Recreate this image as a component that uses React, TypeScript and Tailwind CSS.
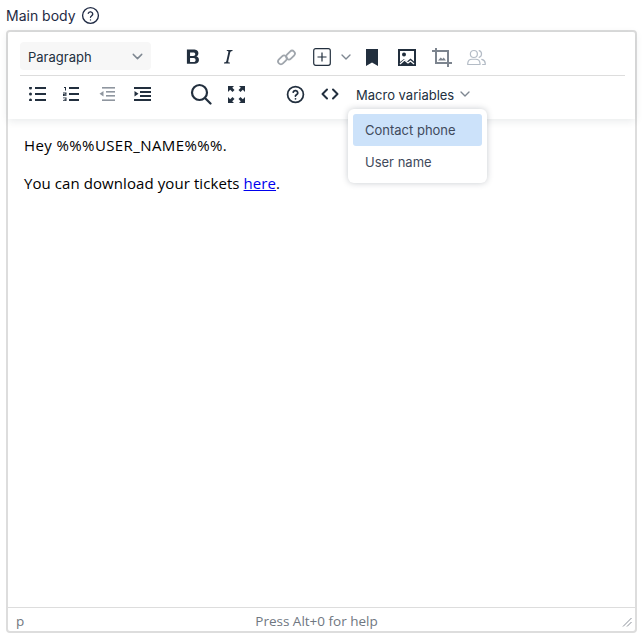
import { ChevronDown } from 'lucide-react'

const ink = '#222f3e'

function Btn({ children, w = 'w-[34px]' }: { children: React.ReactNode; w?: string }) {
  return <div className={`${w} h-[30px] flex items-center justify-center shrink-0`}>{children}</div>
}

export default function App() {
  return (
    <div className="w-[643px] h-[640px] bg-white relative font-['Inter',sans-serif] overflow-hidden">
      {/* Label */}
      <div className="h-[30px] pl-[6px] flex items-center gap-[5px] text-[14px] text-[#1f2a44]">
        <span>Main body</span>
        <svg width="19" height="19" viewBox="0 0 24 24" fill="none" stroke="#1f2a44" strokeWidth="1.700" strokeLinecap="round" strokeLinejoin="round">
          <circle cx="12" cy="12" r="10" />
          <path d="M9.200 9.200a3 3 0 0 1 5.700 1c0 2-2.900 2.600-2.900 4" />
          <path d="M12 17.600h.01" />
        </svg>
      </div>

      {/* Editor */}
      <div className="ml-[6px] w-[631px] h-[603px] border-2 border-[#dddddd] rounded-[4px] flex flex-col relative">
        <div className="h-[87px] pl-[12px] pr-[10px] pt-[10px] shadow-[0_2px_8px_rgba(34,47,62,0.1)] shrink-0 text-[#222f3e]">
          {/* Row 1 */}
          <div className="h-[34px] flex items-start border-b border-[#dddddd]">
            <div className="w-[131px] h-[28px] bg-[#f7f7f7] rounded-[4px] flex items-center justify-between pl-[8px] pr-[5px] text-[13px] text-[#222f3e] mr-[24px]">
              <span className="mt-[3px]">Paragraph</span>
              <ChevronDown size={17} color="#7e8791" />
            </div>
            <Btn><svg width="26" height="26" viewBox="0 0 24 24"><path fill={ink} d="M7.300 19V5h5.900c1.500 0 2.700.3 3.500.9.800.6 1.200 1.500 1.200 2.600 0 .7-.2 1.300-.5 1.800-.4.500-.9.800-1.500 1 .8.200 1.400.6 1.800 1.200.5.600.7 1.300.7 2.100 0 1.200-.4 2.100-1.200 2.800-.8.600-2 .9-3.500.9H7.300zm2.900-6v3.700h3.200c.6 0 1.100-.2 1.400-.5.400-.3.500-.8.500-1.300 0-1.200-.6-1.900-1.900-1.900h-3.200zm0-2h2.900c.6 0 1-.1 1.400-.4.300-.3.500-.7.500-1.200s-.2-1-.5-1.200c-.3-.3-.8-.4-1.400-.4h-2.900V11z" /></svg></Btn>
            <Btn w="w-[38px]"><svg width="24" height="24" viewBox="0 0 24 24"><path fill={ink} d="M10.800 5h5.700v.9c-.9 0-1.400.2-1.700.5-.3.300-.5.800-.7 1.500l-1.800 8.200c-.1.500-.1.900.1 1.100.2.300.700.4 1.500.4v.9H8v-.9c.9 0 1.500-.2 1.800-.5.300-.3.500-.8.700-1.500l1.800-8.200c.1-.5.100-.9-.1-1.100-.2-.3-.7-.4-1.400-.4z" /></svg></Btn>
            <div className="w-[22px]" />
            <Btn w="w-[35px]"><svg width="19" height="19" viewBox="0 0 19 19" fill="none" stroke="#a0a6ad" strokeWidth="1.800"><rect x="8.500" y="4.300" width="10" height="5.600" rx="2.800" transform="rotate(-45 13.500 7.100)" /><rect x="0.500" y="9.100" width="10" height="5.600" rx="2.800" transform="rotate(-45 5.500 11.900)" /></svg></Btn>
            <Btn w="w-[36px]"><svg width="18" height="18" viewBox="0 0 18 18" fill="none" stroke={ink} strokeWidth="1.200"><rect x="0.700" y="0.700" width="16.600" height="16.600" rx="2" /><path d="M9 4.500v9M4.500 9h9" /></svg></Btn>
            <div className="w-[12px] h-[30px] flex items-center justify-center"><ChevronDown size={16} color="#7e8791" className="shrink-0" /></div>
            <Btn w="w-[40px]"><svg width="12" height="17" viewBox="0 0 12 17"><path fill={ink} d="M0 0h12v17l-6-3.600L0 17z" /></svg></Btn>
            <Btn w="w-[30px]"><svg width="18" height="17" viewBox="0 0 18 17"><path fill={ink} d="M0 0h18v17H0z" /><path fill="#ffffff" d="M2 2h14v10.500l-3.500-3-3.500 3-3-2.500L2 13z" /><circle cx="6" cy="5.500" r="2" fill={ink} /><path fill="none" stroke="#ffffff" strokeWidth="1.300" d="M2 15l4.500-4 3.500 3 2.500-2 3.500 3" /></svg></Btn>
            <Btn w="w-[40px]"><svg width="20" height="19" viewBox="0 0 20 19" fill="none" stroke="#7c848e" strokeWidth="2"><path d="M4 0v15h16M0 3h16v16" /><path fill="#7c848e" stroke="none" d="M6 12.500l2.700-3 1.700 1.500 1.300-1.500 2.300 3z" /></svg></Btn>
            <Btn w="w-[28px]"><svg width="21" height="21" viewBox="0 0 24 24" fill="none" stroke="#b4bcc6" strokeWidth="1.400" strokeLinecap="round" strokeLinejoin="round"><circle cx="9" cy="8" r="4" /><path d="M2 20v-1.500a5 5 0 0 1 5-4.500h4a5 5 0 0 1 5 4.500V20z" /><path d="M15 4.200a4 4 0 0 1 0 7.600M18 14.200a5 5 0 0 1 4 4.500V20h-3" /></svg></Btn>
          </div>
          {/* Row 2 */}
          <div className="h-[36px] flex items-center text-[#222f3e]">
            <Btn w="w-[34px]"><svg width="17" height="14" viewBox="0 0 17 14"><g fill={ink}><circle cx="1.500" cy="1" r="1.500" /><circle cx="1.500" cy="7" r="1.500" /><circle cx="1.500" cy="13" r="1.500" /><rect x="6" y="0" width="11" height="2" /><rect x="6" y="6" width="11" height="2" /><rect x="6" y="12" width="11" height="2" /></g></svg></Btn>
            <Btn w="w-[34px]"><svg width="16" height="14" viewBox="0 0 16 14"><g fill={ink}><rect x="6" y="0" width="10" height="2" /><rect x="6" y="6" width="10" height="2" /><rect x="6" y="12" width="10" height="2" /><path d="M1 0h2v3.500H2V1H1zM0 5.500h3.500v2.200H1.200v.5h2.300V9H0V6.800h2.300v-.5H0zM0 10.500h3.500V14H0v-.8h2.400v-.6H.8v-.7h1.600v-.6H0z" /></g></svg></Btn>
            <Btn w="w-[38px]"><svg width="17" height="14" viewBox="0 0 17 14"><g fill="#8f969f"><rect x="3" y="0" width="13" height="1.600" /><rect x="7" y="4" width="9" height="1.600" /><rect x="7" y="8" width="9" height="1.600" /><rect x="3" y="12.400" width="13" height="1.600" /><path d="M4.500 4v5.500L0.500 6.800z" /></g></svg></Btn>
            <Btn w="w-[32px]"><svg width="17" height="14" viewBox="0 0 17 14"><g fill={ink}><rect x="0" y="0" width="17" height="2" /><rect x="6" y="4" width="11" height="2" /><rect x="6" y="8" width="11" height="2" /><rect x="0" y="12" width="17" height="2" /><path d="M0.500 4v5.500L4.500 6.800z" /></g></svg></Btn>
            <div className="w-[24px]" />
            <Btn w="w-[38px]"><svg width="22" height="22" viewBox="0 0 22 22" fill="none" stroke={ink} strokeWidth="2.200" strokeLinecap="round"><circle cx="9.500" cy="9.500" r="7.500" /><path d="M15 15l5.500 5.500" /></svg></Btn>
            <Btn w="w-[32px]"><svg width="17" height="17" viewBox="0 0 17 17"><g fill={ink}><path d="M0 0h6L4.300 1.700 6.500 4 4.500 6 2.200 3.700 0 6zM17 0v6l-2.200-2.300L12.500 6l-2-2 2.300-2.300L11 0zM0 17v-6l2.200 2.300L4.500 11l2 2-2.300 2.300L6 17zM17 17h-6l1.800-1.700-2.300-2.300 2-2 2.300 2.300L17 11z" /></g></svg></Btn>
            <div className="w-[26px]" />
            <Btn w="w-[34px]"><svg width="19" height="19" viewBox="0 0 24 24" fill="none" stroke={ink} strokeWidth="2.200" strokeLinecap="round" strokeLinejoin="round"><circle cx="12" cy="12" r="10" /><path d="M9.100 9a3 3 0 0 1 5.800 1c0 2-3 2.500-3 4" /><path d="M12 17.500h.01" /></svg></Btn>
            <Btn w="w-[36px]"><svg width="18" height="12" viewBox="0 0 18 12" fill="none" stroke={ink} strokeWidth="2" strokeLinecap="round" strokeLinejoin="round"><path d="M6 1.500L1.500 6 6 10.500M12 1.500L16.500 6 12 10.500" /></svg></Btn>
            <div className="ml-[8px] flex items-center gap-[3px] text-[13px] text-[#222f3e]">
              <span className="mt-[3px]">Macro variables</span>
              <ChevronDown size={16} color="#7e8791" />
            </div>
          </div>
        </div>

        {/* Content */}
        <div className="flex-1 pl-[16px] pt-[14px] text-[15px] leading-[24px] text-black font-['Open_Sans',sans-serif]">
          <p className="mb-[14px] tracking-[0.4px]">Hey %%%USER_NAME%%%.</p>
          <p className="tracking-[0.08px]">You can download your tickets <a className="text-[#0000ee] underline">here</a>.</p>
        </div>

        {/* Status bar */}
        <div className="h-[24px] shrink-0 border-t border-[#dddddd] flex items-center pl-[8px] pr-[3px] pt-[4px] text-[13.500px] text-[#6f7781] font-['Open_Sans',sans-serif]">
          <span>p</span>
          <span className="ml-[231px]">Press Alt+0 for help</span>
          <svg className="ml-auto mt-[1px]" width="10" height="10" viewBox="0 0 10 10" stroke="#8a9099" strokeWidth="1" fill="none"><path d="M1 9.500L9.500 1M5 9.500L9.500 5" /></svg>
        </div>
      </div>

      {/* Macro variables menu */}
      <div className="absolute left-[348px] top-[109px] w-[139px] h-[74px] bg-white rounded-[6px] shadow-[0_0_6px_rgba(34,47,62,0.25)] p-[5px] text-[13px] text-[#3f4a5c]">
        <div className="h-[32px] bg-[#cce2fa] rounded-[3px] flex items-center pl-[12px] pt-[2px]">Contact phone</div>
        <div className="h-[32px] flex items-center pl-[12px] pt-[2px]">User name</div>
      </div>
    </div>
  )
}
